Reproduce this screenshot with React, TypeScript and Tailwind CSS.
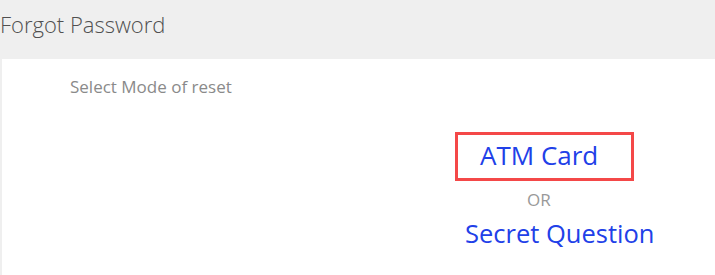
export default function App() {
  return (
    <div className="flex h-[275px] w-[715px] flex-col overflow-hidden bg-[#efefef] font-['Open_Sans',sans-serif]">
      <div className="h-[59px] shrink-0 pt-[13px]">
        <h1 className="text-[22px] font-light leading-none text-[#505050]">Forgot Password</h1>
      </div>
      <div className="ml-[2px] flex flex-1 flex-col items-start bg-white">
        <p className="ml-[68px] mt-[17px] text-[17px] leading-[22px] text-[#8a8a8a]">Select Mode of reset</p>
        <button className="ml-[453px] mt-[34px] flex h-[49px] w-[179px] items-center border-[3px] border-[#f44848] pb-[2px] pl-[22px] text-[26px] text-[#2140e8]">
          ATM Card
        </button>
        <span className="ml-[525px] mt-[8px] text-[17px] leading-[22px] text-[#999]">OR</span>
        <a href="#" className="ml-[463px] mt-[5px] text-[25.5px] leading-[34px] text-[#2140e8]">
          Secret Question
        </a>
      </div>
    </div>
  );
}
